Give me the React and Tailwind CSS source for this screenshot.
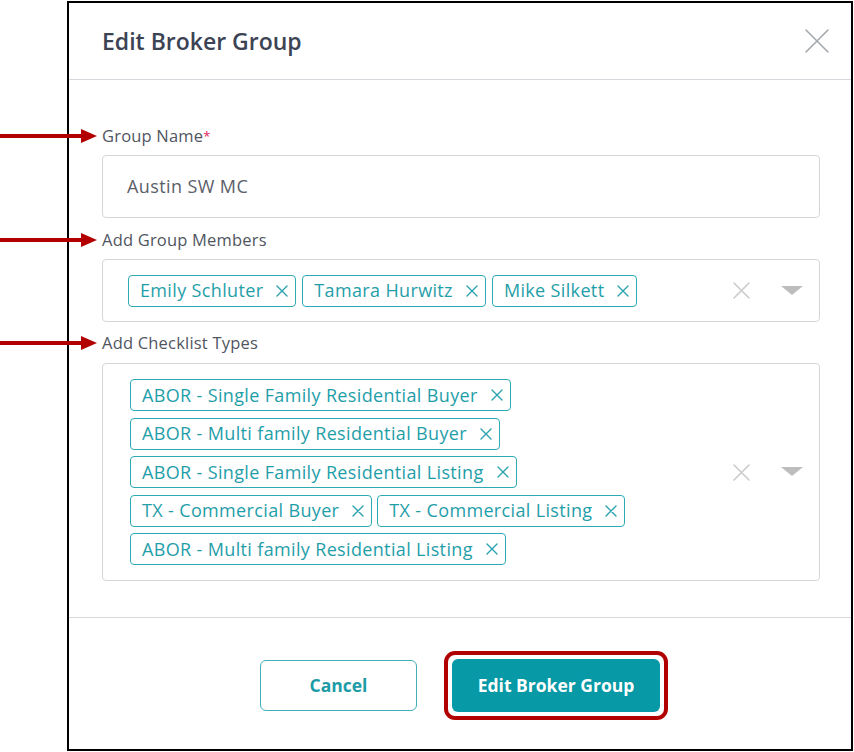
const members = ['Emily Schluter', 'Tamara Hurwitz', 'Mike Silkett'];
const checklistTypes = [
  'ABOR - Single Family Residential Buyer',
  'ABOR - Multi family Residential Buyer',
  'ABOR - Single Family Residential Listing',
  'TX - Commercial Buyer',
  'TX - Commercial Listing',
  'ABOR - Multi family Residential Listing',
];

// plain cross, drawn edge to edge so the size is the visible size
const Cross = ({ size, color, stroke = 1.5, className = '' }) => (
  <svg className={className} width={size} height={size} viewBox={`0 0 ${size} ${size}`}>
    <path d={`M1 1L${size - 1} ${size - 1}M${size - 1} 1L1 ${size - 1}`} stroke={color} strokeWidth={stroke} strokeLinecap="round" />
  </svg>
);

const Arrow = () => (
  <svg className="absolute right-[calc(100%+5px)] top-1/2 -translate-y-1/2" width="97" height="16" viewBox="0 0 97 16">
    <rect x="0" y="6" width="83" height="4" fill="#b20000" />
    <polygon points="81,1 97,8 81,15" fill="#b20000" />
  </svg>
);

const Label = ({ children, required }) => (
  <div className="relative self-start text-[16.5px] tracking-[0.2px] leading-5 text-[#50555f]">
    <Arrow />
    {children}
    {required && <span className="text-[#e0245e] align-top text-[13px]">*</span>}
  </div>
);

const Tag = ({ text }) => (
  <span className="flex items-center h-[32px] pl-[11px] pr-[7px] border border-[#2eaab5] rounded-[4px] text-[18px] tracking-[0.35px] text-[#1f9ea9] whitespace-nowrap">
    {text}
    <Cross className="ml-[13px]" size={12} color="#2aa3ae" stroke={1.4} />
  </span>
);

const Controls = () => (
  <div className="flex items-center gap-[31px] pr-[16px] shrink-0">
    <Cross size={17} color="#cbcbcb" stroke={1.6} />
    <svg width="22" height="10" viewBox="0 0 22 10">
      <polygon points="0,0 22,0 11,9" fill="#bdbdbd" />
    </svg>
  </div>
);

export default function App() {
  return (
    <div className="w-[854px] h-[752px] bg-white" style={{ fontFamily: '"Open Sans", Lato, sans-serif' }}>
      <div className="ml-[67px] pt-[1px]">
        <div className="w-[786px] h-[750px] border-2 border-black flex flex-col">
          {/* Header */}
          <div className="h-[77px] shrink-0 flex items-center justify-between pl-[33px] pr-[22px] border-b border-[#d5d9de]">
            <h2 className="text-[23px] font-semibold text-[#3c4354] pt-[1px]">Edit Broker Group</h2>
            <Cross size={24} color="#a3a7ae" stroke={1.6} />
          </div>

          {/* Body */}
          <div className="flex-1 flex flex-col pl-[33px] pr-[31px] pt-[46px]">
            <Label required>Group Name</Label>
            <div className="mt-[9px] h-[63px] flex items-center px-[24px] border border-[#d3d7dc] rounded-[4px] text-[18px] tracking-[0.4px] text-[#5b6068]">
              Austin SW MC
            </div>

            <div className="mt-[12px]">
              <Label>Add Group Members</Label>
            </div>
            <div className="mt-[9px] h-[63px] flex items-center border border-[#d3d7dc] rounded-[4px]">
              <div className="flex-1 flex flex-wrap gap-[6px] pl-[25px]">
                {members.map((m) => (
                  <Tag key={m} text={m} />
                ))}
              </div>
              <Controls />
            </div>

            <div className="mt-[11px]">
              <Label>Add Checklist Types</Label>
            </div>
            <div className="mt-[10px] flex items-center border border-[#d3d7dc] rounded-[4px] py-[15px]">
              <div className="flex-1 flex flex-wrap gap-x-[5px] gap-y-[6.5px] pl-[27px] pr-[40px]">
                {checklistTypes.map((c, i) => (
                  <div key={c} className={i === 3 || i === 4 ? 'flex' : 'flex basis-full'}>
                    <Tag text={c} />
                  </div>
                ))}
              </div>
              <Controls />
            </div>
          </div>

          {/* Footer */}
          <div className="h-[132px] shrink-0 border-t border-[#d5d9de] flex items-center justify-center gap-[27px] pl-[8px] pt-[4px]">
            <button className="w-[157px] h-[51px] border-[1.5px] border-[#3fb0b9] rounded-[6px] text-[17.5px] font-bold text-[#1c9ba7] bg-white">
              Cancel
            </button>
            <div className="border-4 border-[#b00000] rounded-[11px] p-[4px]">
              <button className="w-[208px] h-[53px] bg-[#0799a5] rounded-[6px] text-[17.5px] font-bold text-white">
                Edit Broker Group
              </button>
            </div>
          </div>
        </div>
      </div>
    </div>
  );
}
